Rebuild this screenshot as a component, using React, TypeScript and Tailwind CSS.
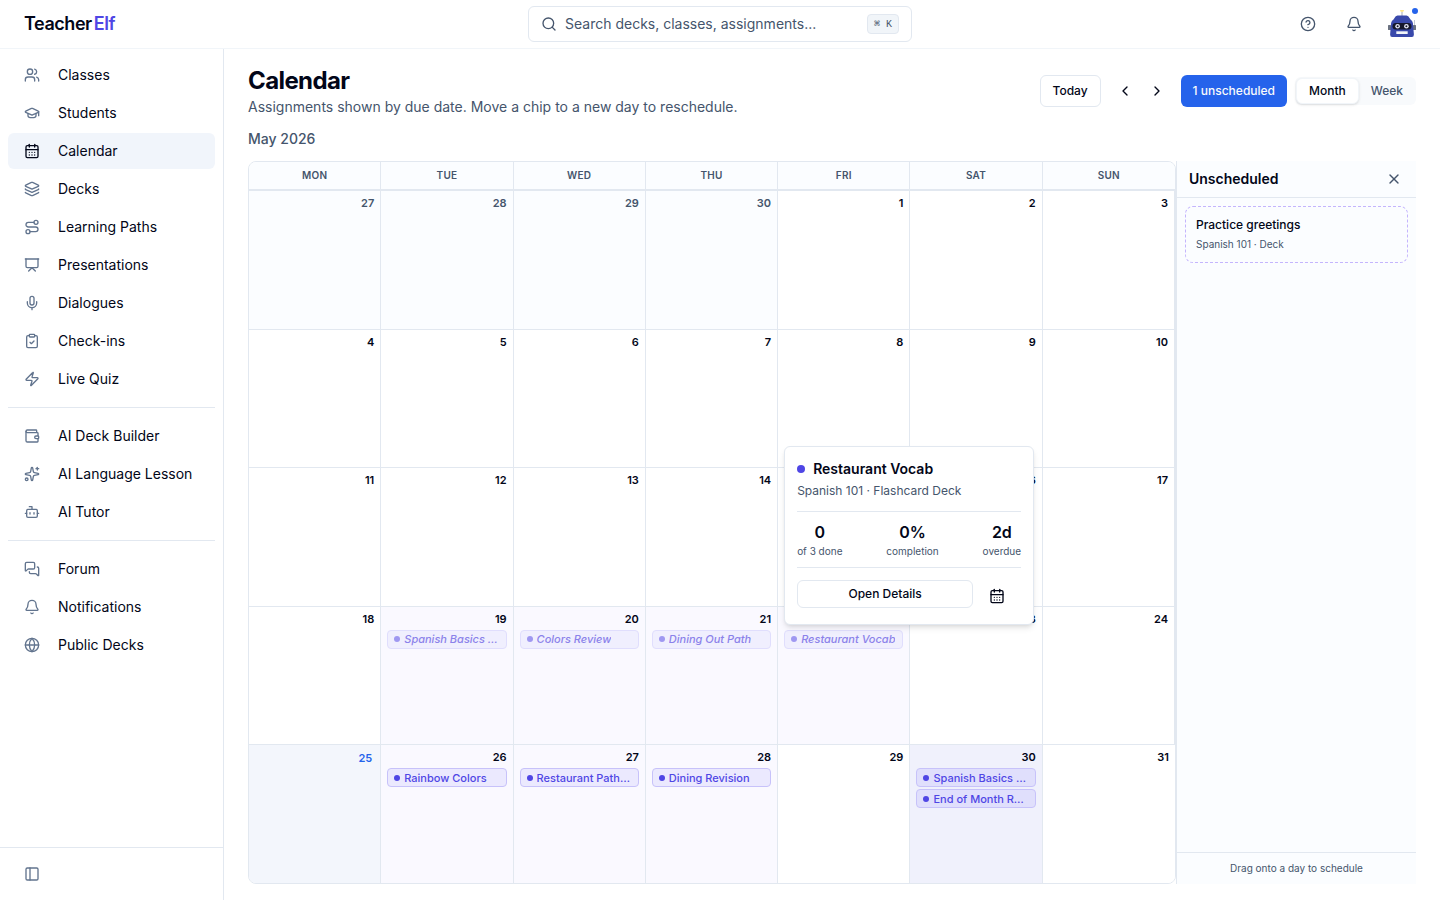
import type { ReactNode } from 'react'
import {
  Bell,
  Bot,
  CalendarDays,
  ChevronLeft,
  ChevronRight,
  CircleHelp,
  ClipboardCheck,
  Globe,
  GraduationCap,
  Layers,
  MessagesSquare,
  Mic,
  PanelLeft,
  Presentation,
  Route,
  Search,
  Sparkles,
  Users,
  Wallet,
  X,
  Zap,
  type LucideIcon,
} from 'lucide-react'
import clsx from 'clsx'

interface NavItem {
  label: string
  icon: LucideIcon
}

interface Chip {
  title: string
  overdue?: boolean
  preview?: boolean
}

interface Day {
  day: number
  outside?: boolean
  today?: boolean
  busy?: boolean
  chips?: Chip[]
}

const navGroups: NavItem[][] = [
  [
    { label: 'Classes', icon: Users },
    { label: 'Students', icon: GraduationCap },
    { label: 'Calendar', icon: CalendarDays },
    { label: 'Decks', icon: Layers },
    { label: 'Learning Paths', icon: Route },
    { label: 'Presentations', icon: Presentation },
    { label: 'Dialogues', icon: Mic },
    { label: 'Check-ins', icon: ClipboardCheck },
    { label: 'Live Quiz', icon: Zap },
  ],
  [
    { label: 'AI Deck Builder', icon: Wallet },
    { label: 'AI Language Lesson', icon: Sparkles },
    { label: 'AI Tutor', icon: Bot },
  ],
  [
    { label: 'Forum', icon: MessagesSquare },
    { label: 'Notifications', icon: Bell },
    { label: 'Public Decks', icon: Globe },
  ],
]

const weekdays = ['Mon', 'Tue', 'Wed', 'Thu', 'Fri', 'Sat', 'Sun']

const weeks: Day[][] = [
  [
    { day: 27, outside: true },
    { day: 28, outside: true },
    { day: 29, outside: true },
    { day: 30, outside: true },
    { day: 1 },
    { day: 2 },
    { day: 3 },
  ],
  [{ day: 4 }, { day: 5 }, { day: 6 }, { day: 7 }, { day: 8 }, { day: 9 }, { day: 10 }],
  [{ day: 11 }, { day: 12 }, { day: 13 }, { day: 14 }, { day: 15 }, { day: 16 }, { day: 17 }],
  [
    { day: 18 },
    { day: 19, chips: [{ title: 'Spanish Basics Quiz', overdue: true }] },
    { day: 20, chips: [{ title: 'Colors Review', overdue: true }] },
    { day: 21, chips: [{ title: 'Dining Out Path', overdue: true }] },
    { day: 22, chips: [{ title: 'Restaurant Vocab', overdue: true, preview: true }] },
    { day: 23 },
    { day: 24 },
  ],
  [
    { day: 25, today: true },
    { day: 26, chips: [{ title: 'Rainbow Colors' }] },
    { day: 27, chips: [{ title: 'Restaurant Path Two' }] },
    { day: 28, chips: [{ title: 'Dining Revision' }] },
    { day: 29 },
    {
      day: 30,
      busy: true,
      chips: [{ title: 'Spanish Basics Final' }, { title: 'End of Month Review' }],
    },
    { day: 31 },
  ],
]

function RobotAvatar() {
  return (
    <svg viewBox="0 0 28 28" className="size-7" aria-hidden="true">
      <path d="M14 2v4" stroke="#a3a8b8" strokeWidth="1" />
      <circle cx="14" cy="0" r="2" fill="#fde68a" />
      <path d="M26.500 10v6" stroke="#c3c8d6" strokeWidth="1" />
      <rect x="0" y="15" width="3" height="5" rx="0.5" fill="#6b7280" />
      <rect x="25" y="15" width="3" height="5" rx="0.5" fill="#6b7280" />
      <path
        d="M6.500 8Q7.500 5.500 9.500 5.500h9q2 0 3 2.500l1 1.500q2 1 2.400 3.500l1 11.500q0 2.500-2 2.500H4.100q-2 0-2-2.500l1-11.500q.4-2.500 2.400-3.500z"
        fill="#3949ab"
      />
      <rect x="4.500" y="13" width="19" height="6.500" rx="3.250" fill="#15172b" />
      <circle cx="9.600" cy="16.300" r="2.300" fill="#e5e7f5" />
      <circle cx="18.400" cy="16.300" r="2.300" fill="#e5e7f5" />
      <circle cx="9.600" cy="16.300" r="1" fill="#15172b" />
      <circle cx="18.400" cy="16.300" r="1" fill="#15172b" />
      <rect x="8.300" y="21.300" width="11.400" height="2.700" fill="#f1f5f9" />
    </svg>
  )
}

function TopBar() {
  return (
    <header className="grid h-[49px] shrink-0 grid-cols-[1fr_minmax(0,384px)_1fr] items-center border-b border-slate-100 px-6">
      <a href="#home" className="text-lg font-semibold tracking-tight">
        Teacher<span className="ml-0.5 text-[#4f46e5]">Elf</span>
      </a>
      <label className="flex h-9 items-center gap-2 rounded-md border border-slate-200 px-3 text-slate-600">
        <Search className="size-4 shrink-0" />
        <input
          type="text"
          aria-label="Search"
          placeholder="Search decks, classes, assignments..."
          className="min-w-0 flex-1 bg-transparent text-sm outline-none placeholder:text-slate-600"
        />
        <kbd className="flex h-5 items-center rounded border border-slate-200 bg-slate-100 px-1.5 font-['Liberation_Mono',monospace] text-[10px] font-medium">
          ⌘ K
        </kbd>
      </label>
      <div className="flex items-center justify-end gap-2.5">
        <button aria-label="Help" className="flex size-9 items-center justify-center text-slate-600">
          <CircleHelp className="size-4" />
        </button>
        <button aria-label="Notifications" className="flex size-9 items-center justify-center text-slate-600">
          <Bell className="size-4" />
        </button>
        <button aria-label="Account" className="relative ml-1.5">
          <RobotAvatar />
          <span className="absolute -right-0.5 -top-0.5 size-1.5 rounded-full bg-[#2563eb]" />
        </button>
      </div>
    </header>
  )
}

function Sidebar() {
  return (
    <aside className="flex w-56 shrink-0 flex-col border-r border-slate-200">
      <nav className="flex flex-1 flex-col gap-0.5 p-2">
        {navGroups.map((group, i) => (
          <ul
            key={i}
            className={clsx('flex flex-col gap-0.5', i > 0 && 'mt-2 border-t border-slate-200 pt-2.5')}
          >
            {group.map(({ label, icon: Icon }) => {
              const active = label === 'Calendar'
              return (
                <li key={label}>
                  <a
                    href={`#${label}`}
                    className={clsx(
                      'flex h-9 items-center gap-[18px] rounded-md px-4 text-sm',
                      active && 'bg-[#f1f5fb]'
                    )}
                  >
                    <Icon className={clsx('size-4', active ? 'text-slate-950' : 'text-slate-500')} />
                    {label}
                  </a>
                </li>
              )
            })}
          </ul>
        ))}
      </nav>
      <div className="flex h-[53px] items-center border-t border-slate-200 px-4">
        <button aria-label="Collapse sidebar" className="p-2 text-slate-500">
          <PanelLeft className="size-4" />
        </button>
      </div>
    </aside>
  )
}

function Toolbar() {
  return (
    <div className="flex items-center gap-2 text-xs font-medium">
      <button className="h-8 rounded-md border border-slate-200 px-3">Today</button>
      <div className="flex">
        <button aria-label="Previous month" className="flex size-8 items-center justify-center">
          <ChevronLeft className="size-4" />
        </button>
        <button aria-label="Next month" className="flex size-8 items-center justify-center">
          <ChevronRight className="size-4" />
        </button>
      </div>
      <button className="h-8 rounded-md bg-[#2563eb] px-3 text-slate-50">1 unscheduled</button>
      <div className="flex h-7 rounded-md bg-slate-50 p-px">
        <button className="rounded-md border border-slate-100 bg-white px-3 shadow-sm">Month</button>
        <button className="px-3 text-slate-600">Week</button>
      </div>
    </div>
  )
}

function Stat({ value, label }: { value: string; label: string }) {
  return (
    <div className="text-center">
      <div className="text-base leading-6 font-semibold">{value}</div>
      <div className="text-[10px] leading-[15px] text-slate-600">{label}</div>
    </div>
  )
}

function PreviewCard({ title }: { title: string }) {
  return (
    <div className="absolute bottom-full left-0 z-10 mb-[5px] w-[250px] rounded-md border border-slate-200 bg-white p-3 shadow-md">
      <div className="flex items-center gap-2 text-sm font-semibold">
        <span className="size-2 rounded-full bg-[#4f46e5]" />
        {title}
      </div>
      <p className="mt-1 text-xs text-slate-600">Spanish 101 · Flashcard Deck</p>
      <div className="my-3 flex justify-between border-y border-slate-200 py-2">
        <Stat value="0" label="of 3 done" />
        <Stat value="0%" label="completion" />
        <Stat value="2d" label="overdue" />
      </div>
      <div className="flex items-start gap-2 pr-2">
        <button className="h-7 flex-1 rounded-md border border-slate-200 text-xs font-medium">
          Open Details
        </button>
        <button aria-label="Reschedule" className="flex size-8 items-center justify-center">
          <CalendarDays className="size-4" />
        </button>
      </div>
    </div>
  )
}

function AssignmentChip({ chip, busy }: { chip: Chip; busy?: boolean }) {
  return (
    <div className="relative">
      <button
        className={clsx(
          'flex h-[19px] w-full items-center gap-1 rounded border px-1.5 text-[11px] font-medium',
          chip.overdue
            ? 'border-[#e0defd] bg-[#f0effe] text-[#8b82ea] italic'
            : 'border-[#c7c2fa] text-[#4f46e5]',
          !chip.overdue && (busy ? 'bg-[#e0dffc]' : 'bg-[#ebe9fe]')
        )}
      >
        <span
          className={clsx('size-1.5 shrink-0 rounded-full', chip.overdue ? 'bg-[#9f98f1]' : 'bg-[#4f46e5]')}
        />
        <span className="truncate">{chip.title}</span>
      </button>
      {chip.preview && <PreviewCard title={chip.title} />}
    </div>
  )
}

function DayCell({ day, outside, today, busy, chips }: Day) {
  let background = 'bg-white'
  if (outside) background = 'bg-[#fbfdff]'
  else if (today) background = 'bg-[#f3f6fc]'
  else if (busy) background = 'bg-[#f0f1fc]'
  else if (chips) background = 'bg-[#faf9ff]'

  return (
    <td
      className={clsx(
        'border-t border-r border-slate-200 p-1.5 align-top group-last:last:border-r-0',
        background
      )}
    >
      <div
        className={clsx(
          'text-right text-[11px] leading-3 font-semibold',
          outside && 'text-slate-600',
          today && 'px-0.5 py-px text-[#2563eb]'
        )}
      >
        {day}
      </div>
      {chips && (
        <div className="mt-[5px] flex flex-col gap-0.5">
          {chips.map((chip) => (
            <AssignmentChip key={chip.title} chip={chip} busy={busy} />
          ))}
        </div>
      )}
    </td>
  )
}

function MonthGrid() {
  return (
    <div className="min-w-0 flex-1 overflow-hidden rounded-lg border border-slate-200">
      <table className="h-full w-full table-fixed border-separate border-spacing-0">
        <thead>
          <tr className="h-7">
            {weekdays.map((name) => (
              <th
                key={name}
                scope="col"
                className="border-r border-b border-slate-200 bg-[#fbfdff] p-0 text-[10px] font-semibold tracking-wide text-slate-600 uppercase last:border-r-0"
              >
                {name}
              </th>
            ))}
          </tr>
        </thead>
        <tbody>
          {weeks.map((week, i) => (
            <tr key={i} className="group h-1/5">
              {week.map((day) => (
                <DayCell key={day.day} {...day} />
              ))}
            </tr>
          ))}
        </tbody>
      </table>
    </div>
  )
}

function UnscheduledPanel() {
  return (
    <section className="flex w-60 shrink-0 flex-col border-l border-slate-200 bg-[#fbfdff]">
      <div className="flex h-[37px] items-center justify-between border-b border-slate-200 pr-3.5 pl-3">
        <h2 className="text-sm font-semibold">Unscheduled</h2>
        <button aria-label="Close" className="text-slate-600">
          <X className="size-4" />
        </button>
      </div>
      <div className="flex-1 p-2">
        <article className="rounded-lg border border-dashed border-[#c4b5fd] p-2.5">
          <h3 className="text-xs font-medium">Practice greetings</h3>
          <p className="mt-1 text-[10px] leading-[15px] text-slate-600">Spanish 101 · Deck</p>
        </article>
      </div>
      <PanelHint>Drag onto a day to schedule</PanelHint>
    </section>
  )
}

function PanelHint({ children }: { children: ReactNode }) {
  return (
    <p className="border-t border-slate-200 py-2 text-center text-[10px] leading-[15px] text-slate-600">
      {children}
    </p>
  )
}

export default function App() {
  return (
    <div className="flex h-screen flex-col bg-white font-[Inter,sans-serif] text-slate-950">
      <TopBar />
      <div className="flex min-h-0 flex-1">
        <Sidebar />
        <main className="flex min-w-0 flex-1 flex-col gap-3 px-6 py-4">
          <div className="flex items-center justify-between">
            <div>
              <h1 className="text-2xl font-bold tracking-tight">Calendar</h1>
              <p className="text-sm text-slate-600">
                Assignments shown by due date. Move a chip to a new day to reschedule.
              </p>
            </div>
            <Toolbar />
          </div>
          <p className="text-sm font-medium text-slate-600">May 2026</p>
          <div className="flex min-h-0 flex-1">
            <MonthGrid />
            <UnscheduledPanel />
          </div>
        </main>
      </div>
    </div>
  )
}
